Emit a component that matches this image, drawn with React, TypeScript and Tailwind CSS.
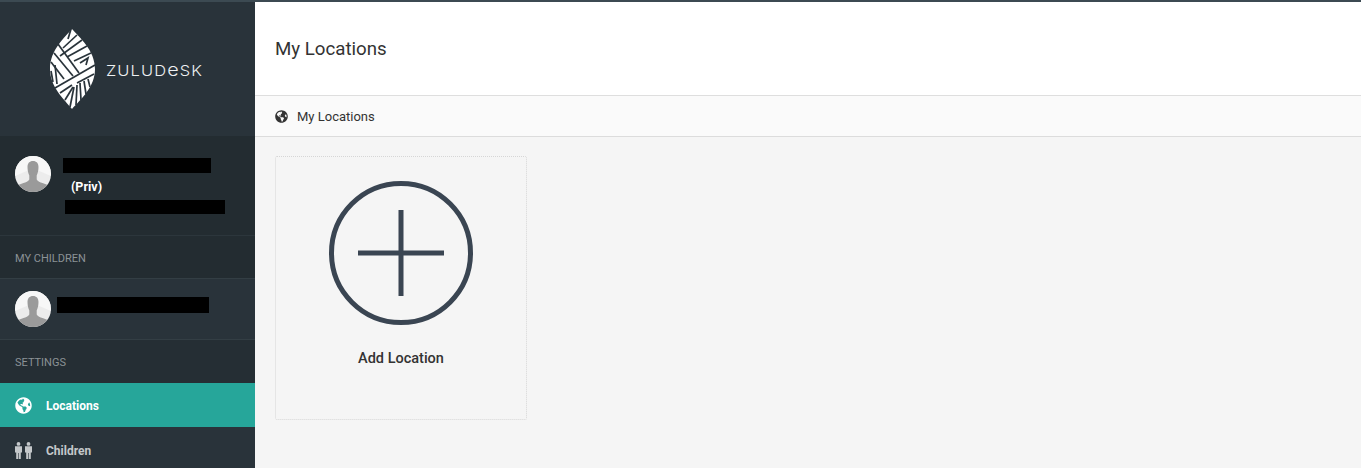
import React from 'react';
import { FaGlobeAmericas } from 'react-icons/fa';

const Avatar = () => (
  <svg viewBox="0 0 36 36" className="w-9 h-9 shrink-0 block">
    <defs>
      <clipPath id="avatar-clip">
        <circle cx="18" cy="18" r="18" />
      </clipPath>
    </defs>
    <g clipPath="url(#avatar-clip)">
      <rect width="36" height="36" fill="#ececec" />
      <path d="M0 0h36v20L22 14H14L0 20z" fill="#f7f7f7" />
      <path
        d="M18 5c-3.500 0-5.500 2.300-5.500 6 0 3.200.6 6.200 1.800 8.400v4c-1 1.800-3.500 2.800-5.800 3.600C5 28 1 30 0 32v4h36v-4c-1-2-5-4-8.500-5-2.300-.8-4.800-1.800-5.800-3.600v-4c1.200-2.200 1.800-5.200 1.800-8.400C23.500 7.300 21.500 5 18 5z"
        fill="#9a9a9a"
      />
    </g>
  </svg>
);

const Logo = () => (
  <svg viewBox="0 0 46 80" className="w-[46px] h-[80px] shrink-0 block">
    <path d="M22 0C29 8 45 21 45 40C45 58 31 70 22 80C14 70 0 58 0 40C0 21 15 8 22 0Z" fill="#ffffff" />
    <g stroke="#29333a" strokeWidth="1.7" fill="none">
      {/* top strands */}
      <path d="M21 0L18 10" />
      <path d="M27 6L13 19" />
      <path d="M32 11L10 27" />
      <path d="M37 17L17 28" />
      <path d="M41 24L24 32" />
      <path d="M30 34L38 29L36 36" />
      {/* left crossing */}
      <path d="M8 15L29 44" />
      <path d="M4 24L23 47" />
      <path d="M1 33L14 50" />
      <path d="M5 36L7 55" />
      <path d="M1 42L3 53" />
      {/* sweeping band */}
      <path d="M45 36L5 59" />
      <path d="M44 45L27 54" />
      {/* bottom fan */}
      <path d="M22 56L10 64" />
      <path d="M23 58L15 71" />
      <path d="M24 58L20 78" />
      <path d="M27 56L26 76" />
      <path d="M30 54L31 71" />
      <path d="M34 52L36 65" />
      <path d="M38 50L40 58" />
    </g>
  </svg>
);

// two standing figures, square shoulders as in the reference
const ChildrenIcon = () => (
  <svg viewBox="0 0 17 17" className="w-[17px] h-[17px] block" fill="currentColor">
    <circle cx="3.500" cy="1.900" r="1.900" />
    <path d="M0 4.300h7v6.200H5.800V17H3.800v-6h-.6v6H1.200v-6.500H0z" />
    <circle cx="13.500" cy="1.900" r="1.900" />
    <path d="M10 4.300h7v6.200h-1.200V17h-2v-6h-.6v6h-2v-6.500H10z" />
  </svg>
);

export default function App() {
  return (
    <div className="w-[1361px] h-[468px] overflow-hidden flex flex-col bg-[#f5f5f5] font-['Roboto',sans-serif]">
      <div className="h-[2px] shrink-0 bg-[#3c4a52]" />
      <div className="flex flex-1 min-h-0">
        {/* Sidebar */}
        <aside className="w-[255px] shrink-0 flex flex-col bg-[#29333a]">
          <div className="h-[134px] shrink-0 flex items-center pl-[50px] gap-[10px]">
            <Logo />
            <span className="mt-[2px] text-[15px] leading-none font-light tracking-[1px] scale-x-[1.1] origin-left text-[#eef1f2] font-['Inter',sans-serif]">
              ZULUD<span className="lowercase text-[18px]">e</span>SK
            </span>
          </div>

          <div className="h-[100px] shrink-0 flex items-start pt-[20px] pl-[15px] bg-[#232c31] border-b border-[#2c363c]">
            <Avatar />
            <div className="flex flex-col ml-[12px] pt-[2px]">
              <div className="w-[148px] h-[15px] bg-black" />
              <div className="ml-[8px] mt-[6px] h-[15px] text-[12.500px] leading-[15px] font-bold text-white">(Priv)</div>
              <div className="ml-[2px] mt-[6px] w-[160px] h-[14px] bg-black" />
            </div>
          </div>

          <div className="h-[43px] shrink-0 flex items-center pl-[15px] pt-[4px] bg-[#232c31] border-b border-[#333e44] text-[11px] text-[#8b9296]">
            MY CHILDREN
          </div>

          <div className="h-[61px] shrink-0 flex items-center pl-[15px] border-b border-[#333e44]">
            <Avatar />
            <div className="ml-[6px] mb-[8px] w-[152px] h-[16px] bg-black" />
          </div>

          <div className="h-[43px] shrink-0 flex items-center pl-[15px] pt-[3px] text-[11px] text-[#8b9296] bg-[#252e34]">
            SETTINGS
          </div>

          <div className="h-[44px] shrink-0 flex items-center pl-[15px] bg-[#26a69a] text-white">
            <FaGlobeAmericas className="w-[17px] h-[17px]" />
            <span className="ml-[14px] text-[12px] font-bold leading-[18px] pt-[1px]">Locations</span>
          </div>

          <div className="h-[45px] shrink-0 flex items-center pl-[15px] pt-[1px] text-[#c4c8ca]">
            <ChildrenIcon />
            <span className="ml-[14px] text-[12px] font-bold leading-[18px] pt-[1px]">Children</span>
          </div>
        </aside>

        {/* Main */}
        <main className="flex-1 flex flex-col min-w-0">
          <header className="h-[94px] shrink-0 flex items-center pl-[20px] pt-[1px] bg-white border-b border-[#dedede]">
            <h1 className="text-[18.700px] font-normal text-[#333333]">My Locations</h1>
          </header>
          <div className="h-[41px] shrink-0 flex items-center pl-[20px] pt-[1px] bg-[#fafafa] border-b border-[#dcdcdc] text-[#333333]">
            <FaGlobeAmericas className="w-[13px] h-[13px]" />
            <span className="ml-[9px] text-[13px]">My Locations</span>
          </div>
          <div className="pl-[20px] pt-[19px]">
            <div className="w-[252px] h-[264px] flex flex-col items-center pt-[24px] border border-dotted border-[#d6d6d6] rounded-[2px]">
              <svg viewBox="0 0 144 144" className="w-[144px] h-[144px] block">
                <circle cx="72" cy="72" r="69.500" fill="none" stroke="#3a4552" strokeWidth="5" />
                <path d="M72 29V115M29 72H115" fill="none" stroke="#3a4552" strokeWidth="5" />
              </svg>
              <div className="mt-[23px] text-[14.500px] font-medium text-[#333333]">Add Location</div>
            </div>
          </div>
        </main>
      </div>
    </div>
  );
}
